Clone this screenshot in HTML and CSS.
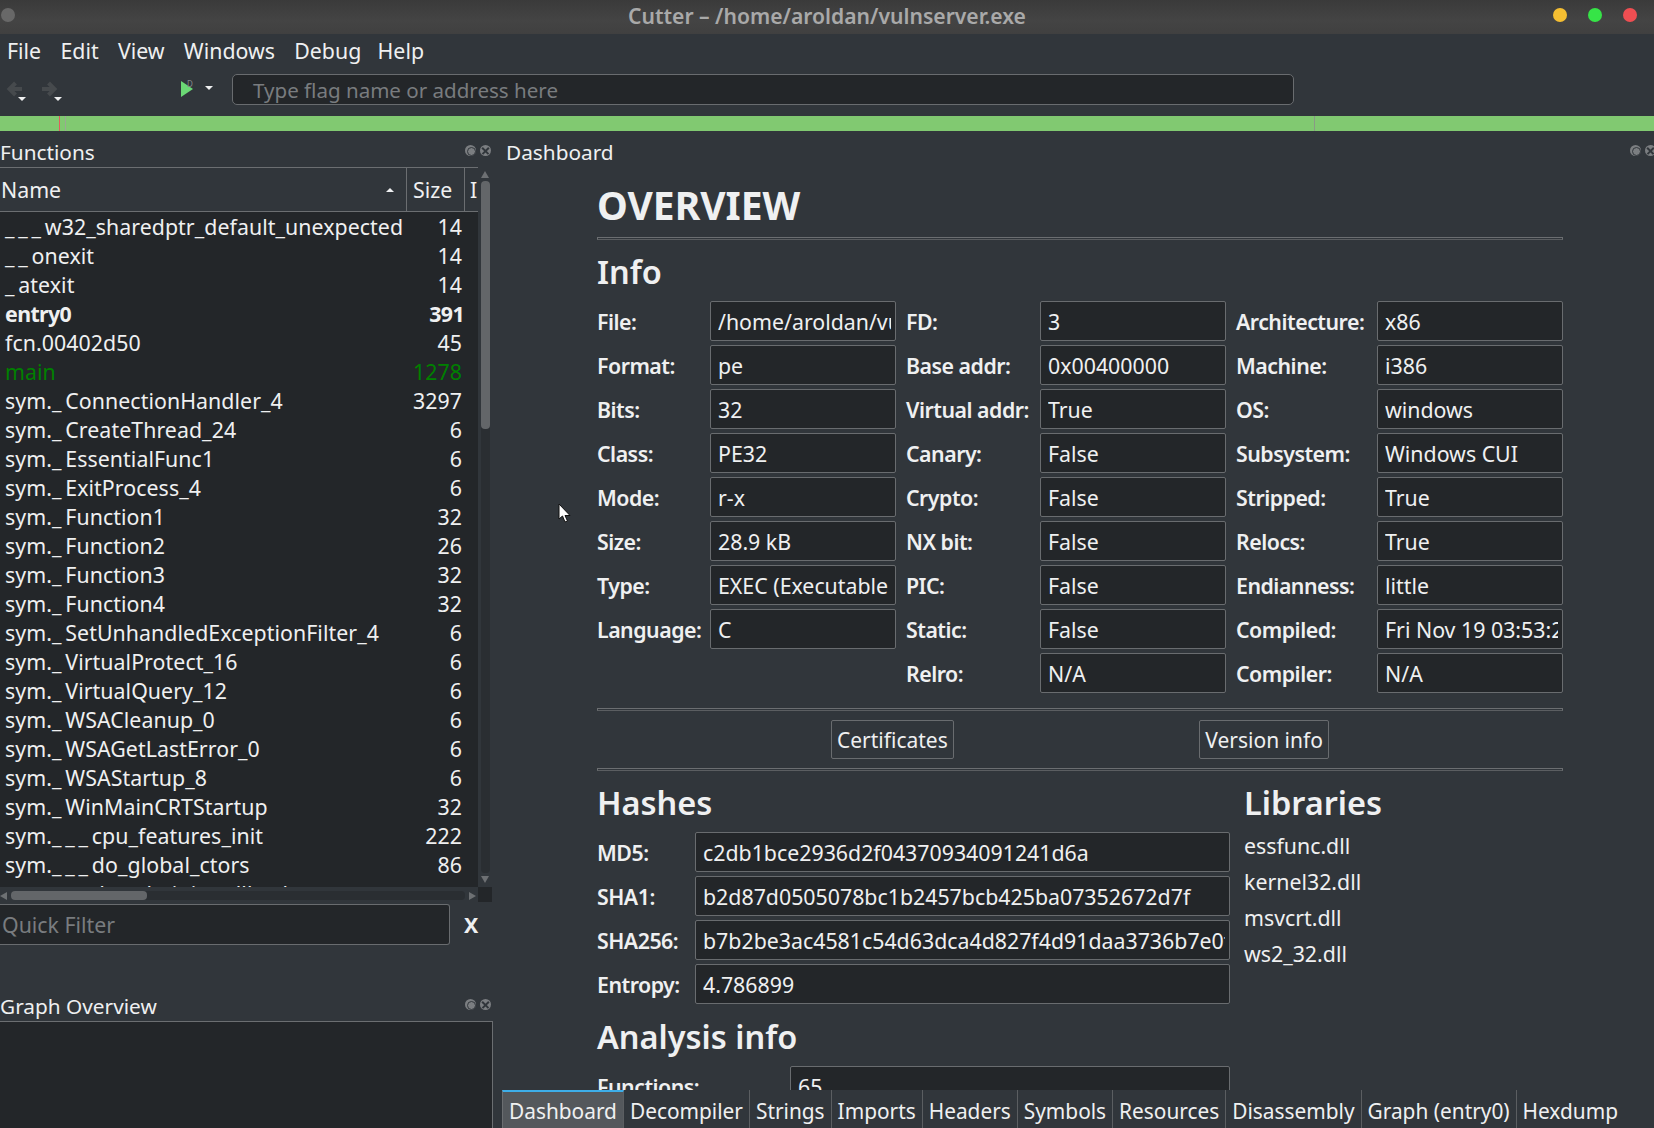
FILE: index.html
```html
<!DOCTYPE html>
<html lang="en">
<head>
    <meta charset="UTF-8">
    <title>Cutter</title>
    <link rel="stylesheet" href="styles.css">
</head>
<body>
    <div class="titlebar">
        <div class="win-left"><span class="dot dot-grey"></span></div>
        <div class="win-title">Cutter – /home/aroldan/vulnserver.exe</div>
        <div class="win-right">
            <span class="dot dot-yellow"></span>
            <span class="dot dot-green"></span>
            <span class="dot dot-red"></span>
        </div>
    </div>

    <div class="menubar">
        <span>File</span><span>Edit</span><span>View</span><span>Windows</span><span>Debug</span><span>Help</span>
    </div>

    <div class="toolbar">
        <div class="tool-btn">
            <svg width="16" height="16" viewBox="0 0 16 16"><path d="M16 8H4M9.500 2 3.500 8l6 6" fill="none" stroke="#464a4d" stroke-width="4"/></svg>
            <span class="caret"></span>
        </div>
        <div class="tool-btn">
            <svg width="16" height="16" viewBox="0 0 16 16"><path d="M0 8h12M6.500 2l6 6-6 6" fill="none" stroke="#464a4d" stroke-width="4"/></svg>
            <span class="caret"></span>
        </div>
        <div class="play-btn">
            <svg width="12" height="16" viewBox="0 0 12 16"><path d="M0 0v16l12-8z" fill="#6bd975"/></svg>
            <span class="play-d">D</span>
            <span class="play-caret"></span>
        </div>
        <div class="flag-input">Type flag name or address here</div>
    </div>

    <div class="overview-bar">
        <span class="mark mark-red"></span>
        <span class="mark mark-grey"></span>
        <span class="mark mark-end"></span>
    </div>

    <div class="docks">
        <div class="left-dock">
            <div class="dock-title">
                <span>Functions</span>
                <span class="dock-icons"><i class="icon-float"></i><i class="icon-close"></i></span>
            </div>
            <div class="fn-panel">
                <div class="fn-main">
                    <div class="fn-head">
                        <div class="head-name">Name<span class="sort-up"></span></div>
                        <div class="head-size">Size</div>
                        <div class="head-more">Imports</div>
                    </div>
                    <div class="fn-rows">
                        <div class="row"><span><span class="us">___</span>w32_sharedptr_default_unexpected</span><span>14</span></div>
                        <div class="row"><span><span class="us">__</span>onexit</span><span>14</span></div>
                        <div class="row"><span><span class="us">_</span>atexit</span><span>14</span></div>
                        <div class="row row-bold"><span>entry0</span><span>391</span></div>
                        <div class="row"><span>fcn.00402d50</span><span>45</span></div>
                        <div class="row row-main"><span>main</span><span>1278</span></div>
                        <div class="row"><span>sym.<span class="us">_</span>ConnectionHandler_4</span><span>3297</span></div>
                        <div class="row"><span>sym.<span class="us">_</span>CreateThread_24</span><span>6</span></div>
                        <div class="row"><span>sym.<span class="us">_</span>EssentialFunc1</span><span>6</span></div>
                        <div class="row"><span>sym.<span class="us">_</span>ExitProcess_4</span><span>6</span></div>
                        <div class="row"><span>sym.<span class="us">_</span>Function1</span><span>32</span></div>
                        <div class="row"><span>sym.<span class="us">_</span>Function2</span><span>26</span></div>
                        <div class="row"><span>sym.<span class="us">_</span>Function3</span><span>32</span></div>
                        <div class="row"><span>sym.<span class="us">_</span>Function4</span><span>32</span></div>
                        <div class="row"><span>sym.<span class="us">_</span>SetUnhandledExceptionFilter_4</span><span>6</span></div>
                        <div class="row"><span>sym.<span class="us">_</span>VirtualProtect_16</span><span>6</span></div>
                        <div class="row"><span>sym.<span class="us">_</span>VirtualQuery_12</span><span>6</span></div>
                        <div class="row"><span>sym.<span class="us">_</span>WSACleanup_0</span><span>6</span></div>
                        <div class="row"><span>sym.<span class="us">_</span>WSAGetLastError_0</span><span>6</span></div>
                        <div class="row"><span>sym.<span class="us">_</span>WSAStartup_8</span><span>6</span></div>
                        <div class="row"><span>sym.<span class="us">_</span>WinMainCRTStartup</span><span>32</span></div>
                        <div class="row"><span>sym.<span class="us">___</span>cpu_features_init</span><span>222</span></div>
                        <div class="row"><span>sym.<span class="us">___</span>do_global_ctors</span><span>86</span></div>
                        <div class="row"><span>sym.<span class="us">___</span>dyn_tls_init_callback</span></div>
                    </div>
                </div>
                <div class="vscroll">
                    <span class="arrow-up"></span>
                    <div class="vtrack"><div class="vthumb"></div></div>
                    <span class="arrow-down"></span>
                </div>
            </div>
            <div class="hscroll-row">
                <div class="hscroll">
                    <span class="arrow-left"></span>
                    <div class="htrack"><div class="hthumb"></div></div>
                    <span class="arrow-right"></span>
                </div>
                <div class="corner"></div>
            </div>
            <div class="filter-row">
                <div class="filter-input">Quick Filter</div>
                <div class="filter-x">X</div>
            </div>
            <div class="dock-title graph-title">
                <span>Graph Overview</span>
                <span class="dock-icons"><i class="icon-float"></i><i class="icon-close"></i></span>
            </div>
            <div class="graph-box"></div>
        </div>

        <div class="center-dock">
            <div class="dock-title center-title">
                <span>Dashboard</span>
                <span class="dock-icons"><i class="icon-float"></i><i class="icon-close"></i></span>
            </div>
            <div class="dash">
                <h1>OVERVIEW</h1>
                <div class="rule"></div>
                <h2>Info</h2>
                <div class="info-grid">
                    <label>File:</label><div class="field">/home/aroldan/vulnserver.exe</div>
                    <label>FD:</label><div class="field">3</div>
                    <label>Architecture:</label><div class="field">x86</div>

                    <label>Format:</label><div class="field">pe</div>
                    <label>Base addr:</label><div class="field">0x00400000</div>
                    <label>Machine:</label><div class="field">i386</div>

                    <label>Bits:</label><div class="field">32</div>
                    <label>Virtual addr:</label><div class="field">True</div>
                    <label>OS:</label><div class="field">windows</div>

                    <label>Class:</label><div class="field">PE32</div>
                    <label>Canary:</label><div class="field">False</div>
                    <label>Subsystem:</label><div class="field">Windows CUI</div>

                    <label>Mode:</label><div class="field">r-x</div>
                    <label>Crypto:</label><div class="field">False</div>
                    <label>Stripped:</label><div class="field">True</div>

                    <label>Size:</label><div class="field">28.9 kB</div>
                    <label>NX bit:</label><div class="field">False</div>
                    <label>Relocs:</label><div class="field">True</div>

                    <label>Type:</label><div class="field">EXEC (Executable file)</div>
                    <label>PIC:</label><div class="field">False</div>
                    <label>Endianness:</label><div class="field">little</div>

                    <label>Language:</label><div class="field">C</div>
                    <label>Static:</label><div class="field">False</div>
                    <label>Compiled:</label><div class="field">Fri Nov 19 03:53:21 2010</div>

                    <div class="grid-skip"></div>
                    <label>Relro:</label><div class="field">N/A</div>
                    <label>Compiler:</label><div class="field">N/A</div>
                </div>
                <div class="rule rule-a"></div>
                <div class="btn-row">
                    <button class="btn">Certificates</button>
                    <button class="btn">Version info</button>
                </div>
                <div class="rule"></div>
                <div class="lower">
                    <div class="hashes">
                        <h2>Hashes</h2>
                        <div class="hash-grid">
                            <label>MD5:</label><div class="field">c2db1bce2936d2f04370934091241d6a</div>
                            <label>SHA1:</label><div class="field">b2d87d0505078bc1b2457bcb425ba07352672d7f</div>
                            <label>SHA256:</label><div class="field">b7b2be3ac4581c54d63dca4d827f4d91daa3736b7e0f3b2a9c4e81d6</div>
                            <label>Entropy:</label><div class="field">4.786899</div>
                        </div>
                    </div>
                    <div class="libs">
                        <h2>Libraries</h2>
                        <ul>
                            <li>essfunc.dll</li>
                            <li>kernel32.dll</li>
                            <li>msvcrt.dll</li>
                            <li>ws2_32.dll</li>
                        </ul>
                    </div>
                </div>
                <h2 class="analysis">Analysis info</h2>
                <div class="analysis-grid">
                    <label>Functions:</label><div class="field">65</div>
                </div>
            </div>
            <div class="tabs">
                <span class="tab tab-on">Dashboard</span>
                <span class="tab">Decompiler</span>
                <span class="tab">Strings</span>
                <span class="tab">Imports</span>
                <span class="tab">Headers</span>
                <span class="tab">Symbols</span>
                <span class="tab">Resources</span>
                <span class="tab">Disassembly</span>
                <span class="tab">Graph (entry0)</span>
                <span class="tab">Hexdump</span>
            </div>
            <svg class="mouse" width="13" height="20" viewBox="0 0 13 20"><path d="M1 1v15l3.500-3 2.500 6 2.500-1-2.500-5.500H12z" fill="#fff" stroke="#111" stroke-width="1"/></svg>
        </div>
    </div>
</body>
</html>
```

FILE: styles.css
```css
/* General Reset */
* {
    margin: 0;
    padding: 0;
    box-sizing: border-box;
}

body {
    width: 1654px;
    height: 1128px;
    overflow: hidden;
    background-color: #31363b;
    color: #eff0f1;
    font-family: "Noto Sans", sans-serif;
    font-size: 21.33px;
    line-height: 29px;
}

/* Window title bar */
.titlebar {
    height: 34px;
    display: grid;
    grid-template-columns: 1fr auto 1fr;
    align-items: center;
    background: linear-gradient(#3a3a3a, #444444 60%, #404040);
}

.win-left {
    padding: 0 0 4px 1px;
    display: flex;
}

.win-right {
    display: flex;
    justify-content: flex-end;
    gap: 21px;
    padding: 0 17px 4px 0;
}

.win-title {
    color: #a9a9a9;
    font-weight: 600;
    font-size: 21.1px;
    padding-bottom: 3px;
}

.dot {
    width: 14px;
    height: 14px;
    border-radius: 50%;
}

.dot-grey { background-color: #686868; }
.dot-yellow { background-color: #f6bf32; }
.dot-green { background-color: #36e447; }
.dot-red { background-color: #f04e52; }

/* Menu */
.menubar {
    height: 34px;
    display: flex;
    align-items: center;
    gap: 19.3px;
    padding: 0 0 2px 7px;
}

.menubar span:last-child {
    margin-left: -3px;
}

/* Toolbar */
.toolbar {
    height: 48px;
    display: flex;
    align-items: flex-start;
    padding-top: 6px;
}

.tool-btn {
    width: 36px;
    height: 31px;
    padding: 7px 0 0 6px;
    display: flex;
    position: relative;
}

.caret {
    position: absolute;
    left: 18px;
    bottom: 4px;
    border-left: 4px solid transparent;
    border-right: 4px solid transparent;
    border-top: 4px solid #eff0f1;
}

.play-btn {
    padding: 7px 0 0 109px;
    display: flex;
    flex: 0 0 160px;
    gap: 12px;
    position: relative;
}

.play-d {
    position: absolute;
    left: 115px;
    top: 5px;
    font-size: 8px;
    line-height: 10px;
    color: #85888b;
}

.play-caret {
    margin-top: 5px;
    border-left: 4px solid transparent;
    border-right: 4px solid transparent;
    border-top: 4px solid #eff0f1;
    height: 0;
}

.flag-input {
    width: 1062px;
    height: 31px;
    background-color: #232629;
    border: 1px solid #696c6f;
    border-radius: 5px;
    color: #797c7f;
    padding-left: 20px;
    font-size: 20.55px;
    line-height: 30px;
}

/* Overview strip */
.overview-bar {
    height: 15px;
    background-color: #81c971;
    position: relative;
}

.mark {
    position: absolute;
    top: 0;
    bottom: 0;
    width: 1px;
}

.mark-red { left: 59px; background-color: #e25c5c; }
.mark-grey { left: 65px; background-color: #9aa893; }
.mark-end { left: 1314px; background-color: #8a9a86; }

/* Docks */
.docks {
    height: 997px;
    display: flex;
}

.left-dock {
    width: 502px;
    flex: none;
    display: flex;
    flex-direction: column;
}

.center-dock {
    flex: 1;
    min-width: 0;
    display: flex;
    flex-direction: column;
    position: relative;
}

.dock-title {
    height: 36px;
    display: flex;
    justify-content: space-between;
    align-items: center;
    padding: 7px 11px 0 0;
    font-size: 20.8px;
}

.dock-icons {
    display: flex;
    gap: 4px;
    margin-bottom: 5px;
}

.dock-icons i {
    width: 11px;
    height: 11px;
    border-radius: 50%;
    background-color: #7b7e81;
    position: relative;
    display: block;
}

.icon-float::after {
    content: "";
    position: absolute;
    left: 2px;
    top: 2px;
    width: 7px;
    height: 7px;
    border-radius: 50%;
    border: 1.5px solid #31363b;
}

.icon-close::before,
.icon-close::after {
    content: "";
    position: absolute;
    left: 1px;
    top: 5px;
    width: 9px;
    height: 1.5px;
    background-color: #31363b;
    transform: rotate(45deg);
}

.icon-close::after {
    transform: rotate(-45deg);
}

/* Functions table */
.fn-panel {
    height: 720px;
    display: flex;
    width: 492px;
}

.fn-main {
    width: 478px;
    display: flex;
    flex-direction: column;
    overflow: hidden;
}

.fn-head {
    height: 45px;
    flex: none;
    display: flex;
    border-top: 1px solid #6b6e71;
    border-bottom: 1px solid #6b6e71;
    line-height: 43px;
}

.head-name {
    width: 407px;
    flex: none;
    padding-left: 1px;
    border-right: 1px solid #6b6e71;
    position: relative;
}

.sort-up {
    position: absolute;
    right: 12px;
    top: 20px;
    border-left: 4px solid transparent;
    border-right: 4px solid transparent;
    border-bottom: 4px solid #eff0f1;
}

.head-size {
    width: 58px;
    flex: none;
    padding-left: 6px;
    border-right: 1px solid #6b6e71;
}

.head-more {
    flex: none;
    padding-left: 5px;
}

.fn-rows {
    flex: 1;
    overflow: hidden;
    background-color: #232629;
}

.row {
    height: 29px;
    display: flex;
    justify-content: space-between;
    padding: 0 16px 0 5px;
    letter-spacing: 0.06px;
}

/* leading underscores draw wider apart in the original */
.us { letter-spacing: 3.8px; }

.row-bold {
    font-weight: 700;
    letter-spacing: -0.6px;
}

.row-bold span:last-child {
    margin-right: -2px;
}

.row-main { color: #008000; }

.vscroll {
    width: 14px;
    display: flex;
    flex-direction: column;
    align-items: center;
    padding-top: 4px;
}

.vtrack {
    flex: 1;
    width: 9px;
    margin: 3px 0;
    background-color: #2a2e32;
    border-radius: 4px;
}

.vthumb {
    height: 248px;
    background-color: #636669;
    border-radius: 4px;
}

.arrow-up { border: 4px solid transparent; border-top: 0; border-bottom: 7px solid #6d7073; }
.arrow-down { border: 4px solid transparent; border-bottom: 0; border-top: 7px solid #6d7073; margin-bottom: 4px; }

.hscroll-row {
    width: 492px;
    height: 15px;
    display: flex;
}

.hscroll {
    width: 478px;
    display: flex;
    align-items: center;
    padding-top: 2px;
}

.htrack {
    flex: 1;
    height: 9px;
    margin: 0 4px;
    background-color: #2a2e32;
    border-radius: 4px;
}

.hthumb {
    width: 136px;
    height: 9px;
    background-color: #636669;
    border-radius: 4px;
}

.arrow-left { border: 4px solid transparent; border-left: 0; border-right: 7px solid #6d7073; }
.arrow-right { border: 4px solid transparent; border-right: 0; border-left: 7px solid #6d7073; margin-right: 2px; }

.corner {
    width: 14px;
    background-color: #232629;
}

/* Quick filter */
.filter-row {
    display: flex;
    height: 41px;
    margin-top: 2px;
    align-items: center;
}

.filter-input {
    width: 450px;
    height: 41px;
    background-color: #232629;
    border: 1px solid #696c6f;
    border-left: 0;
    border-radius: 0 3px 3px 0;
    color: #797c7f;
    padding-left: 2px;
    line-height: 39px;
}

.filter-x {
    margin-left: 14px;
    font-weight: 700;
}

.graph-title {
    margin-top: 40px;
}

.graph-box {
    flex: 1;
    width: 493px;
    background-color: #232629;
    border-top: 1px solid #6b6e71;
    border-right: 1px solid #6b6e71;
}

/* Dashboard */
.center-title {
    padding-left: 4px;
    padding-right: 0;
}

.center-title .dock-icons {
    margin-right: -2px;
}

.dash {
    flex: 1;
    min-height: 0;
    overflow: hidden;
    padding: 0 91px 0 95px;
}

h1 {
    font-size: 39px;
    line-height: 48px;
    font-weight: 700;
    margin: 14px 0 8px;
}

h2 {
    font-size: 32.5px;
    line-height: 44px;
    font-weight: 600;
}

.rule {
    height: 3px;
    border: 1px solid #6b6e71;
    border-bottom-color: #5b5e61;
}

.rule + h2 {
    margin-top: 10px;
}

.info-grid {
    display: grid;
    grid-template-columns: 103px 186px 124px 186px 131px 186px;
    grid-auto-rows: 40px;
    gap: 4px 10px;
    margin-top: 7px;
}

label {
    font-weight: 600;
    letter-spacing: -0.5px;
    line-height: 42px;
    white-space: nowrap;
}

.grid-skip {
    grid-column: span 2;
}

.field {
    height: 40px;
    background-color: #232629;
    border: 1px solid #696c6f;
    border-radius: 2px;
    padding: 1px 4px 0 7px;
    line-height: 38px;
    white-space: nowrap;
    overflow: clip;
    overflow-clip-margin: content-box;
    min-width: 0;
}

.rule-a {
    margin-top: 15px;
}

.btn-row {
    height: 39px;
    margin: 9px 0;
    padding-left: 234px;
    display: flex;
    gap: 245.500px;
}

.btn {
    height: 39px;
    padding: 1px 5px 0;
    font: inherit;
    font-size: 21px;
    line-height: 37px;
    background-color: #31363b;
    border: 1px solid #696c6f;
    border-radius: 2px;
    color: #eff0f1;
}

.lower {
    display: flex;
}

.hashes {
    width: 633px;
    flex: none;
}

.hashes h2,
.libs h2 {
    margin-top: 10px;
}

.libs {
    margin-left: 14px;
}

.hash-grid {
    display: grid;
    grid-template-columns: 98px 535px;
    grid-auto-rows: 40px;
    row-gap: 4px;
    margin-top: 7px;
}

.libs ul {
    list-style: none;
    margin-top: 6px;
}

.libs li {
    height: 36px;
    line-height: 29px;
}

.analysis {
    margin-top: 11px;
}

.analysis-grid {
    display: grid;
    grid-template-columns: 193px 440px;
    margin-top: 7px;
}

/* Bottom tabs */
.tabs {
    position: absolute;
    left: 0;
    right: 0;
    bottom: 0;
    height: 38px;
    display: flex;
    background-color: #31363b;
    font-size: 20.85px;
}

.tab {
    padding: 7px 6px 0;
    border-right: 1px solid #5b5e61;
    white-space: nowrap;
}

.tab:last-child {
    border-right: 0;
}

.tab-on {
    background-color: #54585c;
    border-top: 2px solid #3daee9;
    border-left: 1px solid #6b6e71;
    padding-top: 5px;
}

.mouse {
    position: absolute;
    left: 56px;
    top: 372px;
}
```
